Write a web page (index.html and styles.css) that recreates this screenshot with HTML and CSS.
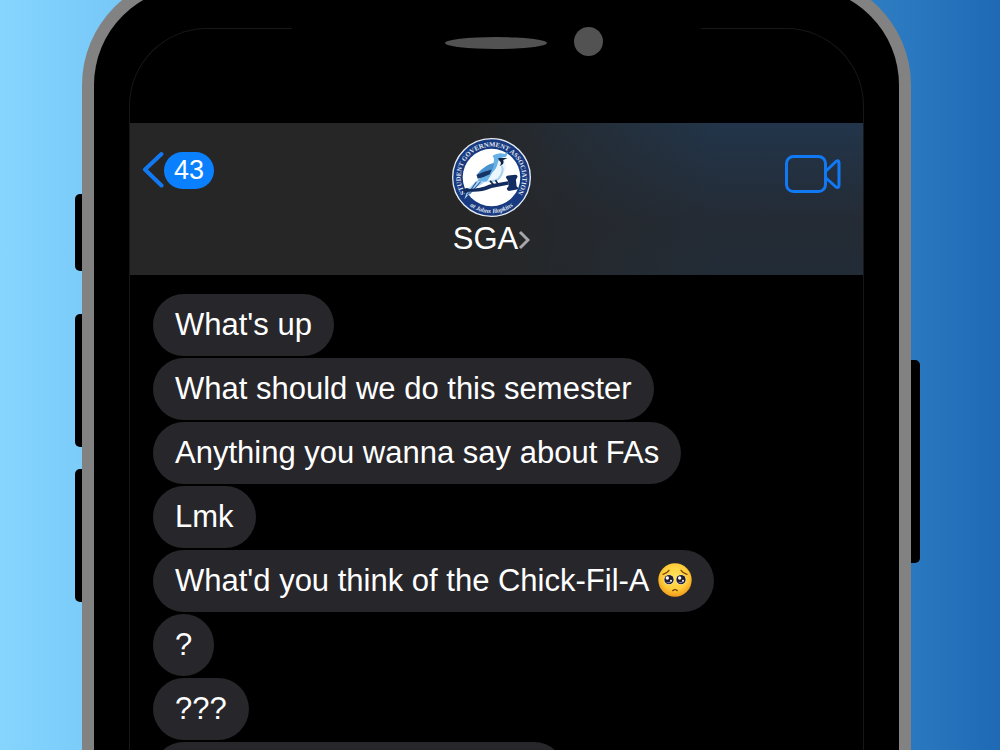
FILE: index.html
```html
<!DOCTYPE html>
<html lang="en">
<head>
<meta charset="utf-8">
<title>SGA messages</title>
<link rel="stylesheet" href="styles.css">
</head>
<body>
<div class="phone">
  <span class="key key-mute"></span>
  <span class="key key-up"></span>
  <span class="key key-down"></span>
  <span class="key key-power"></span>
  <main class="screen">
    <div class="notch">
      <span class="speaker"></span>
      <span class="camera"></span>
    </div>
    <header class="bar">
      <button class="back" type="button" aria-label="Back, 43 unread">
        <svg class="chevron" viewBox="0 0 22 38" aria-hidden="true"><path d="M19.500 3 L3 18.500 L19.500 34.500"/></svg>
        <span class="count">43</span>
      </button>
      <button class="contact" type="button">
        <svg class="avatar" viewBox="39 24 236 236" role="img" aria-label="Student Government Association seal">
          <defs>
            <path id="ring-top" d="M92 207 A92 92 0 1 1 222 207"/>
            <path id="ring-bottom" d="M81 217 A107 107 0 0 0 233 217"/>
          </defs>
          <circle cx="157" cy="142" r="116" fill="#173a80" stroke="#e7ebf2" stroke-width="4"/>
          <circle cx="157" cy="142" r="86" fill="#fff"/>
          <text class="seal-top"><textPath href="#ring-top" startOffset="50%">STUDENT GOVERNMENT ASSOCIATION</textPath></text>
          <text class="seal-bottom"><textPath href="#ring-bottom" startOffset="50%">at Johns Hopkins</textPath></text>
          <path d="M76 207 L86 178 Q105 158 120 145 L136 157 Q108 173 96 186 Z" fill="#a9d3f2"/>
          <path d="M84 195 L112 155 M91 192 L125 154" stroke="#2b5b9b" stroke-width="3" fill="none"/>
          <path d="M165 77 Q180 69 194 73 Q202 81 196 94 L201 108 Q196 143 167 154 Q145 163 125 155 Q128 128 150 110 Q168 101 166 86 Z" fill="#edf6fd"/>
          <path d="M160 77 Q177 65 197 72 L206 64 L201 80 Q179 82 176 97 Q174 113 159 128 L144 153 Q130 157 116 152 Q136 126 158 103 Q171 92 160 77Z" fill="#67b1e6"/>
          <path d="M114 132 Q139 103 163 99 Q167 113 154 121 Q133 130 114 132Z" fill="#4a92cf"/>
          <path d="M112 134 Q134 124 158 118 L152 132 Q132 142 116 146Z" fill="#163567"/>
          <path d="M177 84 L205 84 L192 90 Q197 103 181 108 Q190 98 180 91Z" fill="#122241"/>
          <path d="M188 108 Q196 125 177 147 Q160 156 148 152" fill="none" stroke="#a9d2ef" stroke-width="6"/>
          <path d="M70 181 Q78 169 92 176 Q123 176 151 163 L206 153 L207 164 L157 173 Q124 187 91 184 L78 190Z" fill="#122c60"/>
          <path d="M153 152 L163 164 M169 150 L176 161" stroke="#14264a" stroke-width="5"/>
          <path d="M200 142 Q200 136 208 136 L228 134 Q235 134 235 140 L230 149 L232 168 Q238 173 237 177 L209 182 Q202 180 203 174 L208 168 L206 151Z" fill="#112d63"/>
        </svg>
        <span class="name">SGA<svg class="more" viewBox="0 0 12 20" aria-hidden="true"><path d="M2 2 L10 10 L2 18"/></svg></span>
      </button>
      <button class="video" type="button" aria-label="Video call">
        <svg viewBox="0 0 56 38" aria-hidden="true"><rect x="1.500" y="1.500" width="39" height="35" rx="7"/><path d="M41 16 L51 6.500 Q54 4.500 54 8 V30 Q54 33.500 51 32 L41 23"/></svg>
      </button>
    </header>
    <ul class="chat">
      <li class="bubble">What's up</li>
      <li class="bubble">What should we do this semester</li>
      <li class="bubble">Anything you wanna say about FAs</li>
      <li class="bubble">Lmk</li>
      <li class="bubble">What'd you think of the Chick-Fil-A
        <svg class="emoji" viewBox="0 0 102 102" role="img" aria-label="Pleading face">
          <defs>
            <radialGradient id="skin" cx="50%" cy="40%" r="60%"><stop offset="0" stop-color="#ffe45b"/><stop offset=".65" stop-color="#ffcc39"/><stop offset="1" stop-color="#f29b19"/></radialGradient>
          </defs>
          <circle cx="51" cy="51" r="50" fill="url(#skin)"/>
          <path d="M15 34 Q27 31 33 22 M69 22 Q75 31 87 34" fill="none" stroke="#7c4310" stroke-width="4" stroke-linecap="round"/>
          <circle cx="33" cy="50" r="15" fill="#fff"/><circle cx="69" cy="50" r="15" fill="#fff"/>
          <circle cx="33" cy="50" r="14" fill="#211c2b"/><circle cx="69" cy="50" r="14" fill="#211c2b"/>
          <path d="M24 56 Q33 66 42 55 Q34 58 24 56 M60 56 Q69 66 78 55 Q70 58 60 56" fill="#7080b8"/>
          <circle cx="28" cy="45" r="5" fill="#fff"/><circle cx="65" cy="45" r="5" fill="#fff"/>
          <circle cx="39" cy="53" r="3" fill="#fff"/><circle cx="75" cy="53" r="3" fill="#fff"/>
          <path d="M44 83 Q51 77 58 83" fill="none" stroke="#74400f" stroke-width="4" stroke-linecap="round"/>
        </svg>
      </li>
      <li class="bubble">?</li>
      <li class="bubble">???</li>
      <li class="bubble bubble-next" aria-hidden="true"></li>
    </ul>
  </main>
</div>
</body>
</html>
```

FILE: styles.css
```css
* { box-sizing: border-box; }

body {
  margin: 0;
  height: 100vh;
  overflow: hidden;
  font-family: "Liberation Sans", Arial, sans-serif;
  background: linear-gradient(90deg, #85d5ff 0%, #7acbf9 9%, #2a79c0 91%, #1f69b5 100%);
}

button {
  padding: 0;
  border: 0;
  background: none;
  font: inherit;
  color: inherit;
}

.phone {
  position: relative;
  display: flex;
  flex-direction: column;
  height: calc(100vh + 25px);
  margin: -25px 89px 0 82px;
  padding: 41px 35px 0;
  border: 12px solid #828282;
  border-bottom: 0;
  border-radius: 110px 110px 0 0;
  background: #000;
}

.key {
  position: absolute;
  left: -19px;
  width: 7px;
  background: #000;
  border-radius: 5px 0 0 5px;
}
.key-mute { top: 207px; height: 77px; }
.key-up { top: 327px; height: 133px; }
.key-down { top: 482px; height: 133px; }
.key-power {
  top: 373px;
  right: -21px;
  left: auto;
  width: 9px;
  height: 203px;
  border-radius: 0 5px 5px 0;
}

.screen {
  flex: 1;
  min-height: 0;
  border: 1px solid #171717;
  border-bottom: 0;
  border-radius: 78px 78px 0 0;
}

.notch {
  display: flex;
  justify-content: center;
  gap: 27px;
  height: 95px;
  margin: -1px 162px 0;
  padding-left: 54px;
  background: #000;
}
.speaker {
  width: 102px;
  height: 12px;
  margin-top: 9px;
  border-radius: 50%;
  background: #525252;
}
.camera {
  width: 29px;
  height: 29px;
  margin-top: -1px;
  border-radius: 50%;
  background: #525252;
}

.bar {
  display: grid;
  grid-template-columns: 1fr auto 1fr;
  align-items: start;
  height: 152px;
  padding: 15px 22px 0 12px;
  color: #fff;
  background:
    linear-gradient(90deg, #262626 0%, #262626 46%, rgba(38, 38, 38, .5) 62%, rgba(38, 38, 38, 0) 80%),
    linear-gradient(180deg, #22354a 0%, #242b35 65%, #222c36 100%);
}

.back {
  display: flex;
  align-items: center;
  margin-top: 13px;
}
.chevron { width: 22px; height: 38px; }
.chevron path {
  fill: none;
  stroke: #1279f5;
  stroke-width: 4;
  stroke-linecap: round;
  stroke-linejoin: round;
}
.count {
  width: 50px;
  border-radius: 19px;
  background: #0b80ff;
  font-size: 27px;
  line-height: 37px;
  text-align: center;
}

.contact {
  display: flex;
  flex-direction: column;
  align-items: center;
}
.avatar { width: 79px; height: 79px; }
.seal-top, .seal-bottom {
  font-family: "Liberation Serif", serif;
  font-weight: bold;
  text-anchor: middle;
  fill: #e2e8f2;
}
.seal-top { font-size: 20px; }
.seal-bottom { font-size: 19px; font-style: italic; }
.name {
  display: flex;
  align-items: center;
  font-size: 31px;
  line-height: 44px;
}
.more { width: 12px; height: 20px; margin-top: 2px; }
.more path { fill: none; stroke: #a5a7a9; stroke-width: 3; }

.video {
  justify-self: end;
  margin-top: 17px;
}
.video svg { display: block; width: 56px; height: 38px; }
.video rect, .video path {
  fill: none;
  stroke: #1279f5;
  stroke-width: 3;
  stroke-linejoin: round;
}

.chat {
  display: flex;
  flex-direction: column;
  align-items: flex-start;
  gap: 2px;
  height: calc(100% - 246px);
  margin: 0;
  padding: 19px 23px 0;
  overflow: hidden;
  list-style: none;
}
.bubble {
  flex: none;
  padding: 0 22px;
  border-radius: 31px;
  background: #27262b;
  color: #fff;
  font-size: 31px;
  line-height: 62px;
}
.bubble-next { width: 60%; height: 62px; }
.emoji { width: 34px; height: 34px; margin-left: 2px; vertical-align: -6px; }
```
